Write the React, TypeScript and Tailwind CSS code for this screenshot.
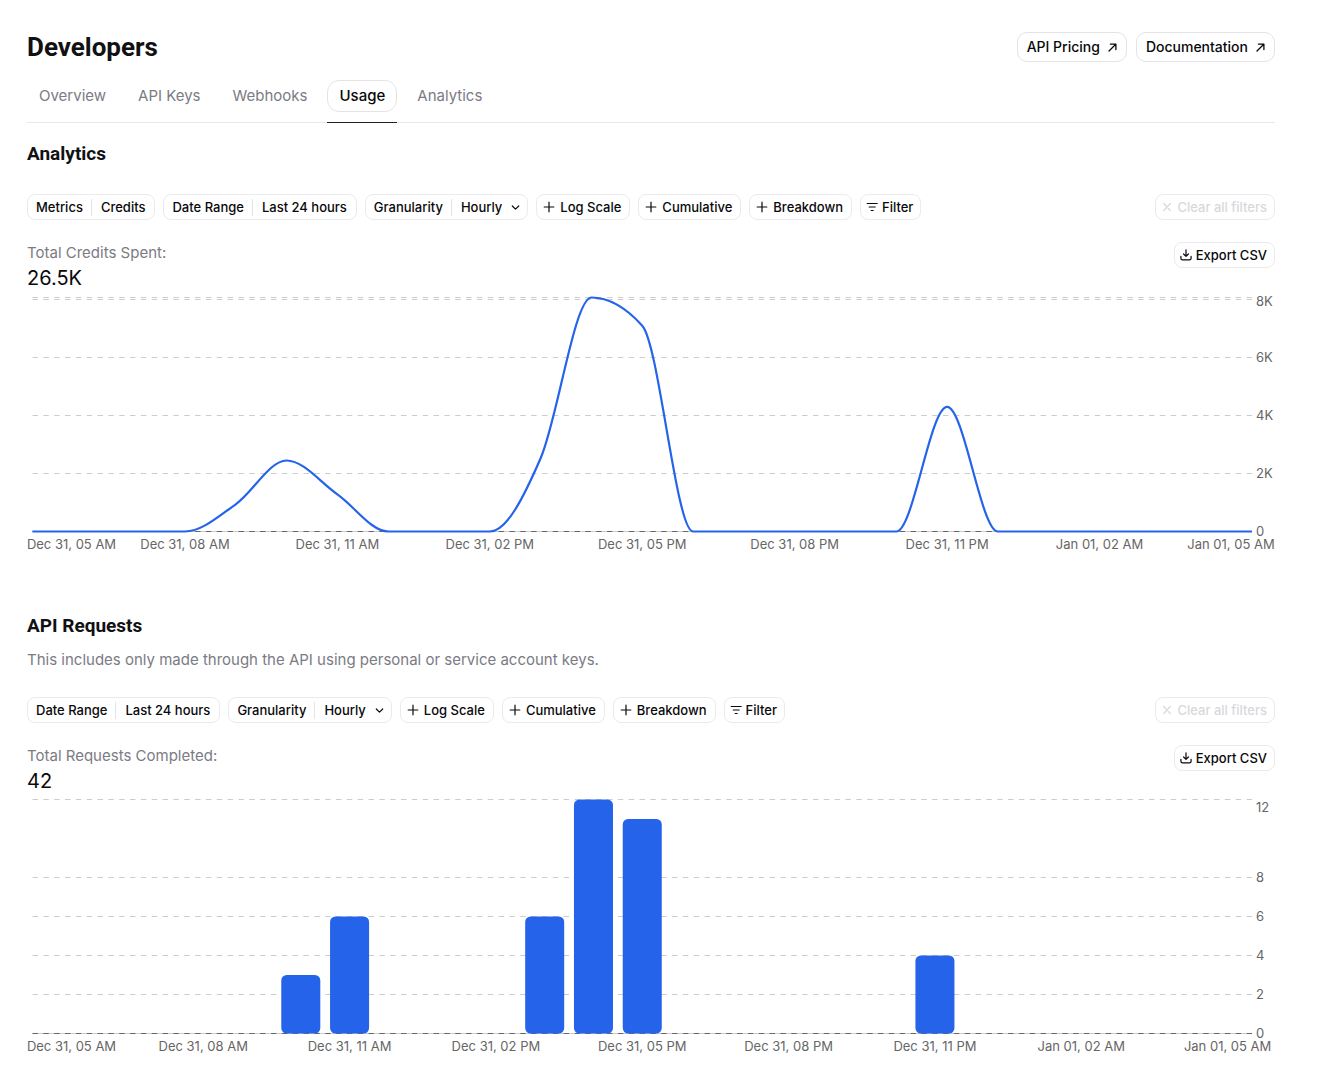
import { useLayoutEffect, useRef, useState, type ReactNode } from "react";

const HOURS = [
  "Dec 31, 05 AM",
  "Dec 31, 08 AM",
  "Dec 31, 11 AM",
  "Dec 31, 02 PM",
  "Dec 31, 05 PM",
  "Dec 31, 08 PM",
  "Dec 31, 11 PM",
  "Jan 01, 02 AM",
  "Jan 01, 05 AM",
];

const CREDITS = [
  0, 0, 0, 0, 938, 2448, 1283, 0, 0, 0, 2524, 8069, 7097, 0, 0, 0, 0, 0, 4295,
  0, 0, 0, 0, 0, 0,
];

const REQUESTS = [
  0, 0, 0, 0, 0, 3, 6, 0, 0, 0, 6, 12, 11, 0, 0, 0, 0, 0, 4, 0, 0, 0, 0, 0, 0,
];

const PLOT_HEIGHT = 234;
const MARGIN_LEFT = 5.5;
const MARGIN_RIGHT = 23;

/* ---------- icons ---------- */

type IconProps = { d: string; size?: number; stroke?: number };

function Icon({ d, size = 12, stroke = 1.2 }: IconProps) {
  return (
    <svg
      width={size}
      height={size}
      viewBox={`0 0 ${size} ${size}`}
      fill="none"
      stroke="currentColor"
      strokeWidth={stroke}
      strokeLinecap="round"
      strokeLinejoin="round"
      aria-hidden="true"
      className="shrink-0"
    >
      <path d={d} />
    </svg>
  );
}

const ArrowIcon = () => (
  <Icon size={9} stroke={1.3} d="M1 8 7.8 1.2M2.4 1.1H7.9V6.6" />
);
const PlusIcon = () => <Icon d="M6 1.2V10.8M1.2 6H10.8" />;
const FilterIcon = () => <Icon d="M1.2 2.5H11.2M3.2 6H9.2M5.2 9.5H7.2" />;
const CloseIcon = () => <Icon d="M2.7 2.5 9.3 9.5M9.3 2.5 2.7 9.5" />;
const DownloadIcon = () => (
  <Icon d="M6 0.8V7.2M3.6 5 6 7.4 8.4 5M0.9 7.3V9.2Q0.9 10.8 2.5 10.8H9.5Q11.1 10.8 11.1 9.2V7.3" />
);
const ChevronIcon = () => <Icon size={9} d="M1.3 3 4.5 6.2 7.7 3" />;

/* ---------- controls ---------- */

const chip =
  "flex h-[26px] items-center rounded-lg border border-[#ebebed] bg-white text-[13px] leading-4 font-medium whitespace-nowrap";

function PairChip({ name, value }: { name: string; value: string }) {
  return (
    <button type="button" className={`${chip} pr-[9px] pl-2`}>
      <span>{name}</span>
      <span className="mr-[9px] ml-2 h-[17px] w-px bg-[#e4e4e7]" />
      <span>{value}</span>
    </button>
  );
}

function GranularityChip() {
  return (
    <label className={`${chip} relative pl-2`}>
      <span>Granularity</span>
      <span className="mr-[9px] ml-2 h-[17px] w-px bg-[#e4e4e7]" />
      <select
        defaultValue="Hourly"
        className="field-sizing-content appearance-none bg-transparent pr-[25px] font-medium outline-none"
      >
        <option>Hourly</option>
        <option>Daily</option>
      </select>
      <span className="pointer-events-none absolute right-[7px]">
        <ChevronIcon />
      </span>
    </label>
  );
}

function IconChip({
  icon,
  children,
  disabled,
}: {
  icon: ReactNode;
  children: ReactNode;
  disabled?: boolean;
}) {
  return (
    <button
      type="button"
      disabled={disabled}
      className={`${chip} gap-1 pr-[7px] pl-[5px] disabled:text-[#d8d8dc]`}
    >
      {icon}
      {children}
    </button>
  );
}

function ToggleChip({ children }: { children: ReactNode }) {
  return (
    <button type="button" aria-pressed="false" className={`${chip} gap-[5px] pr-2 pl-[6px]`}>
      <PlusIcon />
      {children}
    </button>
  );
}

function Toolbar({ children }: { children?: ReactNode }) {
  return (
    <div className="mt-[26px] flex items-start justify-between gap-2">
      <div className="flex flex-wrap gap-2">
        {children}
        <PairChip name="Date Range" value="Last 24 hours" />
        <GranularityChip />
        <ToggleChip>Log Scale</ToggleChip>
        <ToggleChip>Cumulative</ToggleChip>
        <ToggleChip>Breakdown</ToggleChip>
        <IconChip icon={<FilterIcon />}>Filter</IconChip>
      </div>
      <IconChip icon={<CloseIcon />} disabled>
        Clear all filters
      </IconChip>
    </div>
  );
}

function Total({ label, value }: { label: string; value: string }) {
  return (
    <div className="mt-[22px] flex items-start justify-between">
      <dl>
        <dt className="text-[15px] leading-[22px] text-[#7b7b84]">{label}</dt>
        <dd className="text-xl leading-7">{value}</dd>
      </dl>
      <IconChip icon={<DownloadIcon />}>Export CSV</IconChip>
    </div>
  );
}

/* ---------- charts ---------- */

function useWidth() {
  const ref = useRef<HTMLDivElement>(null);
  const [width, setWidth] = useState(1248);
  useLayoutEffect(() => {
    const node = ref.current;
    if (!node) return;
    const update = () => setWidth(node.clientWidth);
    update();
    const observer = new ResizeObserver(update);
    observer.observe(node);
    return () => observer.disconnect();
  }, []);
  return { ref, width };
}

/* Monotone cubic interpolation, so the curve never overshoots its points. */
function monotonePath(points: [number, number][]) {
  const slope = points.slice(1).map(([x, y], i) => (y - points[i][1]) / (x - points[i][0]));
  const tangent = points.map((_, i) => {
    if (i === 0 || i === points.length - 1) return 0;
    const a = slope[i - 1];
    const b = slope[i];
    return (Math.sign(a) + Math.sign(b)) * Math.min(Math.abs(a), Math.abs(b), Math.abs(a + b) / 4);
  });
  return points.reduce((path, [x, y], i) => {
    if (i === 0) return `M${x},${y}`;
    const [px, py] = points[i - 1];
    const dx = (x - px) / 3;
    return `${path}C${px + dx},${py + dx * tangent[i - 1]},${x - dx},${y - dx * tangent[i]},${x},${y}`;
  }, "");
}

type ChartProps = {
  kind: "line" | "bar";
  title: string;
  data: number[];
  max: number;
  top: number;
  ticks: { value: number; label: string }[];
};

function Chart({ kind, title, data, max, top, ticks }: ChartProps) {
  const { ref, width } = useWidth();
  const left = MARGIN_LEFT;
  const right = width - MARGIN_RIGHT;
  const plotWidth = right - left;
  const base = top + PLOT_HEIGHT;
  const y = (v: number) => base - (v / max) * PLOT_HEIGHT;
  const band = plotWidth / data.length;
  const x = (i: number) =>
    kind === "line" ? left + (plotWidth * i) / (data.length - 1) : left + band * (i + 0.5);
  const half = 44;
  const labelX = (i: number) => Math.min(Math.max(x(i), half + 0.5), width - half);
  const grid = [...new Set([...ticks.map((t) => t.value), max])].filter((v) => v > 0);

  return (
    <div ref={ref} className="w-full">
      <svg width={width} height={268} role="img" aria-label={title} className="block overflow-visible">
        <g stroke="#cccccc" strokeDasharray="5.42 5.42">
          {grid.map((v) => (
            <line key={v} x1={left} x2={right} y1={y(v)} y2={y(v)} />
          ))}
          <line x1={left} x2={right} y1={base} y2={base} strokeDasharray="none" />
        </g>
        <line x1={left} x2={right} y1={base} y2={base} stroke="#666666" strokeDasharray="5.42 5.42" />
        {kind === "line" ? (
          <path
            d={monotonePath(data.map((v, i) => [x(i), y(v)]))}
            fill="none"
            stroke="#2563eb"
            strokeWidth={2.2}
          />
        ) : (
          data.map((v, i) =>
            v > 0 ? (
              <rect
                key={i}
                x={left + band * (i + 0.1)}
                y={y(v)}
                width={band * 0.8}
                height={base - y(v)}
                rx={5.4}
                fill="#2563eb"
              />
            ) : null,
          )
        )}
        <g fill="#666666" fontSize={13}>
          {ticks.map((t) => (
            <text key={t.label} x={right + 4} y={Math.max(y(t.value) + 4, top + (kind === "line" ? 8 : 12))}>
              {t.label}
            </text>
          ))}
          {HOURS.map((label, i) => (
            <text key={label} x={labelX(i * 3)} y={base + 17} textAnchor="middle">
              {label}
            </text>
          ))}
        </g>
      </svg>
    </div>
  );
}

/* ---------- page ---------- */

const heading = "font-['Roboto',sans-serif] font-bold text-[#111113]";
const outlineLink =
  "flex h-[30px] items-center gap-2 rounded-[10px] border border-[#e4e4e7] px-[9px] text-sm font-medium";
const tabs = ["Overview", "API Keys", "Webhooks", "Usage", "Analytics"];

export default function App() {
  return (
    <main className="min-h-screen bg-white pt-8 pr-[50px] pl-[27px] font-['Inter',sans-serif] text-[#09090b]">
      <header className="flex h-[30px] items-center justify-between">
        <h1 className={`${heading} text-[26px] leading-[30px]`}>Developers</h1>
        <div className="flex gap-[9px]">
          <a href="#pricing" className={outlineLink}>
            API Pricing
            <ArrowIcon />
          </a>
          <a href="#documentation" className={outlineLink}>
            Documentation
            <ArrowIcon />
          </a>
        </div>
      </header>

      <nav className="mt-[18px] flex gap-2 border-b border-[#e8e8ea] text-[15px] leading-[22px]">
        {tabs.map((tab) =>
          tab === "Usage" ? (
            <a key={tab} href="#usage" aria-current="page" className="-mb-px border-b border-[#222225] pb-[10px]">
              <span className="flex h-8 items-center rounded-xl border border-[#e4e4e7] px-[11px] font-medium">
                {tab}
              </span>
            </a>
          ) : (
            <a key={tab} href={`#${tab}`} className="flex h-8 items-center px-3 text-[#7b7b84]">
              {tab}
            </a>
          ),
        )}
      </nav>

      <section className="mt-[17px]">
        <h2 className={`${heading} text-[19px] leading-7`}>Analytics</h2>
        <Toolbar>
          <PairChip name="Metrics" value="Credits" />
        </Toolbar>
        <Total label="Total Credits Spent:" value="26.5K" />
        <Chart
          kind="line"
          title="Credits spent per hour"
          data={CREDITS}
          max={8069}
          top={5.5}
          ticks={[
            { value: 0, label: "0" },
            { value: 2000, label: "2K" },
            { value: 4000, label: "4K" },
            { value: 6000, label: "6K" },
            { value: 8000, label: "8K" },
          ]}
        />
      </section>

      <section className="mt-[52px]">
        <h2 className={`${heading} text-[19px] leading-7`}>API Requests</h2>
        <p className="mt-[9px] text-[15px] leading-[22px] text-[#7b7b84]">
          This includes only made through the API using personal or service account keys.
        </p>
        <Toolbar />
        <Total label="Total Requests Completed:" value="42" />
        <Chart
          kind="bar"
          title="API requests per hour"
          data={REQUESTS}
          max={12}
          top={4.5}
          ticks={[
            { value: 0, label: "0" },
            { value: 2, label: "2" },
            { value: 4, label: "4" },
            { value: 6, label: "6" },
            { value: 8, label: "8" },
            { value: 12, label: "12" },
          ]}
        />
      </section>
    </main>
  );
}
